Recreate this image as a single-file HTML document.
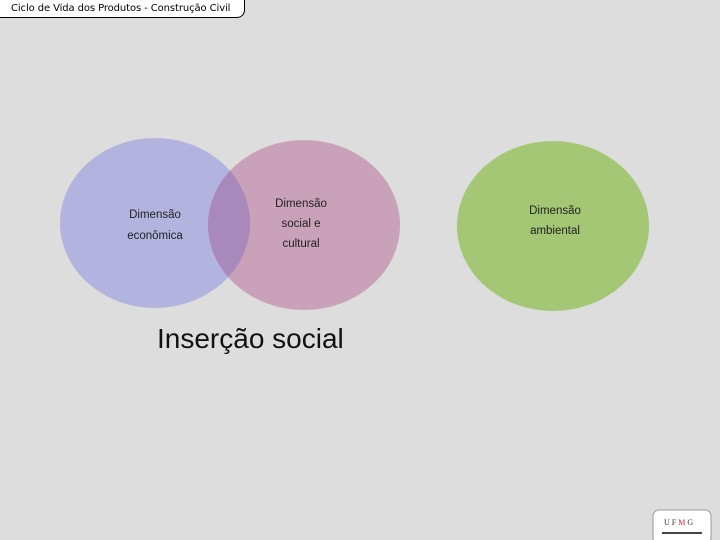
<html><head><style>
body{margin:0;width:720px;height:540px;background:#dddddd;position:relative;overflow:hidden;font-family:"Liberation Sans",sans-serif}
.hdr{position:absolute;left:-2px;top:-2px;width:247px;height:20px;background:#fff;border:1px solid #000;border-top:none;border-left:none;border-bottom-right-radius:8px;font-size:10px;line-height:22px;padding-left:13px;box-sizing:border-box;font-family:"DejaVu Sans",sans-serif;white-space:nowrap;letter-spacing:-0.1px}
.t{position:absolute;font-size:11.5px;color:#222;text-align:center}
</style></head><body>
<div class="hdr">Ciclo de Vida dos Produtos - Construção Civil</div>
<svg width="720" height="540" style="position:absolute;left:0;top:0">
<ellipse cx="155" cy="223" rx="95" ry="85" fill="#b3b3e0"/>
<ellipse cx="304" cy="225" rx="96" ry="85" fill="#c9a1b8"/>
<clipPath id="c"><ellipse cx="155" cy="223" rx="95" ry="85"/></clipPath>
<ellipse cx="304" cy="225" rx="96" ry="85" fill="#a989bb" clip-path="url(#c)"/>
<ellipse cx="553" cy="226" rx="96" ry="85" fill="#a3c775"/>
<rect x="653" y="510" width="58" height="34" rx="6" fill="#fff" stroke="#999"/>
<text x="664" y="525" font-size="8" font-family="Liberation Serif" fill="#333" letter-spacing="2">UF<tspan fill="#c03030">M</tspan>G</text>
<rect x="662" y="532" width="40" height="2" fill="#444"/>
</svg>
<div class="t" style="left:105px;top:209px;width:100px">Dimensão</div>
<div class="t" style="left:105px;top:230px;width:100px">econômica</div>
<div class="t" style="left:251px;top:198px;width:100px">Dimensão</div>
<div class="t" style="left:251px;top:218px;width:100px">social e</div>
<div class="t" style="left:251px;top:238px;width:100px">cultural</div>
<div class="t" style="left:505px;top:205px;width:100px">Dimensão</div>
<div class="t" style="left:505px;top:225px;width:100px">ambiental</div>
<div style="position:absolute;left:157px;top:323px;font-size:28px;color:#111">Inserção social</div>
</body></html>
